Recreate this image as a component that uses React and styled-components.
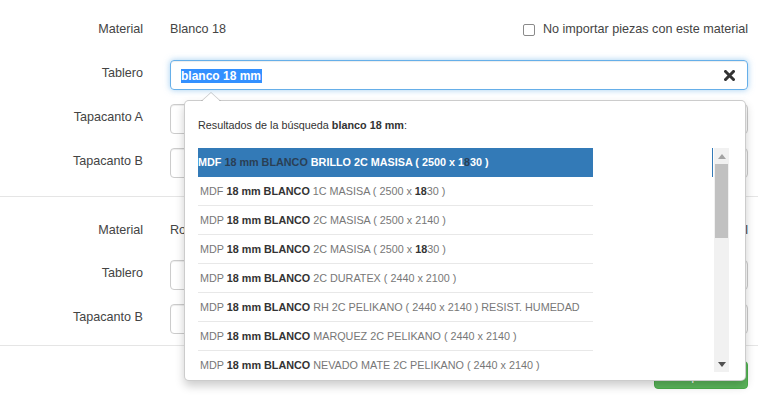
import React from "react";
import styled, { createGlobalStyle } from "styled-components";

const Global = createGlobalStyle`
  html, body { margin: 0; padding: 0; background: #fff; }
  body {
    font-family: "Liberation Sans", Arial, sans-serif;
    color: #333;
    width: 758px;
    height: 398px;
    overflow: hidden;
  }
`;

const S = {
  Page: styled.div`
    position: relative;
    width: 758px;
    height: 398px;
  `,
  Section: styled.div`
    padding: ${(p) => p.pad};
    border-bottom: 1px solid #e5e5e5;
    display: flex;
    flex-direction: column;
    gap: 14px;
  `,
  Row: styled.div`
    display: grid;
    grid-template-columns: 143px 1fr;
    column-gap: 27px;
    align-items: ${(p) => (p.plain ? "center" : "start")};
    height: 30px;
    padding-right: 10px;
    margin-bottom: ${(p) => p.extra || 0}px;
  `,
  Label: styled.div`
    font-size: 12.6px;
    line-height: 15px;
    padding-top: ${(p) => (p.plain ? 0 : 6)}px;
    text-align: right;
    color: #444;
  `,
  Value: styled.div`
    display: flex;
    align-items: center;
    font-size: 12.6px;
    color: #444;
  `,
  Grow: styled.span`
    flex: 1;
  `,
  Check: styled.span`
    width: 10px;
    height: 10px;
    border: 1px solid #8a8a8a;
    border-radius: 2px;
    margin-right: 8px;
    margin-top: 2px;
  `,
  Input: styled.div`
    height: 30px;
    box-sizing: border-box;
    border: 1px solid ${(p) => (p.focus ? "#66afe9" : "#ccc")};
    border-radius: 4px;
    box-shadow: ${(p) =>
      p.focus
        ? "inset 0 1px 1px rgba(0,0,0,.075), 0 0 6px rgba(102,175,233,.6)"
        : "inset 0 1px 1px rgba(0,0,0,.075)"};
    display: flex;
    align-items: center;
    padding: 0 12px 0 10px;
  `,
  Selected: styled.span`
    background: #3390ff;
    color: #fff;
    font-weight: bold;
    font-size: 12px;
    line-height: 17px;
    padding-right: 1px;
  `,
  Footer: styled.div`
    display: flex;
    justify-content: flex-end;
    padding: 15px 10px 0 0;
  `,
  Button: styled.div`
    width: 94px;
    height: 28px;
    box-sizing: border-box;
    background: #5cb85c;
    border: 1px solid #4cae4c;
    border-radius: 4px;
    color: #fff;
    font-size: 13px;
    display: flex;
    align-items: center;
    justify-content: center;
  `,
  Popup: styled.div`
    position: absolute;
    left: 184px;
    top: 100px;
    width: 562px;
    height: 281px;
    box-sizing: border-box;
    background: #fff;
    border: 1px solid rgba(0, 0, 0, 0.2);
    border-radius: 5px;
    box-shadow: 0 5px 10px rgba(0, 0, 0, 0.2);
    padding: 18px 16px 0 13px;
    &::before,
    &::after {
      content: "";
      position: absolute;
      left: 16px;
      border: 10px solid transparent;
      border-top: 0;
    }
    &::before {
      top: -9px;
      border-bottom: 9px solid rgba(0, 0, 0, 0.2);
    }
    &::after {
      top: -8px;
      border-bottom: 9px solid #fff;
    }
  `,
  Heading: styled.div`
    font-size: 10.8px;
    color: #333;
    height: 29px;
    b { font-weight: bold; }
  `,
  ListBox: styled.div`
    display: flex;
    height: 224px;
    overflow: hidden;
  `,
  Rows: styled.div`
    width: 395px;
    display: flex;
    flex-direction: column;
  `,
  Item: styled.div`
    flex: 0 0 29px;
    box-sizing: border-box;
    display: flex;
    align-items: center;
    font-size: 10.8px;
    white-space: nowrap;
    overflow: hidden;
    padding-left: ${(p) => (p.active ? 0 : 2)}px;
    color: ${(p) => (p.active ? "#fff" : "#777")};
    background: ${(p) => (p.active ? "#337ab7" : "transparent")};
    font-weight: ${(p) => (p.active ? "bold" : "normal")};
    border-bottom: 1px solid ${(p) => (p.active ? "#337ab7" : "#e8e8e8")};
    b { color: #333; font-weight: bold; }
  `,
  Hit: styled.span`
    color: #2a3f55;
    font-weight: bold;
  `,
  Spacer: styled.div`
    flex: 1;
  `,
  FocusMark: styled.div`
    width: 1px;
    height: 29px;
    background: #337ab7;
    margin-right: 1px;
  `,
  Scrollbar: styled.div`
    width: 15px;
    background: #f1f1f1;
    display: flex;
    flex-direction: column;
    align-items: center;
  `,
  Arrow: styled.div`
    height: 16px;
    display: flex;
    align-items: center;
    justify-content: center;
  `,
  Thumb: styled.div`
    width: 13px;
    height: 74px;
    background: #c1c1c1;
  `,
};

function Caret({ up, color }) {
  return (
    <svg width="8" height="5" viewBox="0 0 8 5">
      <path d={up ? "M0 5 L4 0 L8 5 Z" : "M0 0 L4 5 L8 0 Z"} fill={color} />
    </svg>
  );
}

function ClearIcon() {
  return (
    <svg width="11" height="11" viewBox="0 0 11 11">
      <path d="M1.5 1.5 L9.5 9.5 M9.5 1.5 L1.5 9.5" stroke="#333" strokeWidth="3" strokeLinecap="square" />
    </svg>
  );
}

const RESULTS = [
  ["MDF", " 1C MASISA ( 2500 x ", true, " )"],
  ["MDP", " 2C MASISA ( 2500 x 2140 )"],
  ["MDP", " 2C MASISA ( 2500 x ", true, " )"],
  ["MDP", " 2C DURATEX ( 2440 x 2100 )"],
  ["MDP", " RH 2C PELIKANO ( 2440 x 2140 ) RESIST. HUMEDAD"],
  ["MDP", " MARQUEZ 2C PELIKANO ( 2440 x 2140 )"],
  ["MDP", " NEVADO MATE 2C PELIKANO ( 2440 x 2140 )"],
];

function FieldRow({ label, children, extra, plain }) {
  return (
    <S.Row extra={extra} plain={plain}>
      <S.Label plain={plain}>{label}</S.Label>
      {children}
    </S.Row>
  );
}

export default function App() {
  return (
    <S.Page>
      <Global />
      <S.Section pad="14px 0 18px">
        <FieldRow label="Material" extra={2} plain>
          <S.Value>
            <S.Grow>Blanco 18</S.Grow>
            <S.Check />
            No importar piezas con este material
          </S.Value>
        </FieldRow>
        <FieldRow label="Tablero">
          <S.Input focus>
            <S.Grow>
              <S.Selected>blanco 18 mm</S.Selected>
            </S.Grow>
            <ClearIcon />
          </S.Input>
        </FieldRow>
        <FieldRow label="Tapacanto A">
          <S.Input />
        </FieldRow>
        <FieldRow label="Tapacanto B">
          <S.Input />
        </FieldRow>
      </S.Section>
      <S.Section pad="18px 0 11px">
        <FieldRow label="Material" extra={1} plain>
          <S.Value>
            <S.Grow>Roble Santana</S.Grow>
            <S.Check />
            No importar piezas con este material
          </S.Value>
        </FieldRow>
        <FieldRow label="Tablero">
          <S.Input />
        </FieldRow>
        <FieldRow label="Tapacanto B">
          <S.Input />
        </FieldRow>
      </S.Section>
      <S.Footer>
        <S.Button>Importar</S.Button>
      </S.Footer>

      <S.Popup>
        <S.Heading>
          Resultados de la búsqueda <b>blanco 18 mm</b>:
        </S.Heading>
        <S.ListBox>
          <S.Rows>
            <S.Item active>
              <span>
                MDF <S.Hit>18 mm BLANCO</S.Hit> BRILLO 2C MASISA ( 2500 x 1<S.Hit>8</S.Hit>30 )
              </span>
            </S.Item>
            {RESULTS.map(([kind, rest, hit, tail], idx) => (
              <S.Item key={idx}>
                <span>
                  {kind} <b>18 mm BLANCO</b>
                  {rest}
                  {hit && (
                    <>
                      <b>18</b>30
                    </>
                  )}
                  {tail}
                </span>
              </S.Item>
            ))}
          </S.Rows>
          <S.Spacer />
          <S.FocusMark />
          <S.Scrollbar>
            <S.Arrow>
              <Caret up color="#a3a3a3" />
            </S.Arrow>
            <S.Thumb />
            <S.Spacer />
            <S.Arrow>
              <Caret color="#505050" />
            </S.Arrow>
          </S.Scrollbar>
        </S.ListBox>
      </S.Popup>
    </S.Page>
  );
}
